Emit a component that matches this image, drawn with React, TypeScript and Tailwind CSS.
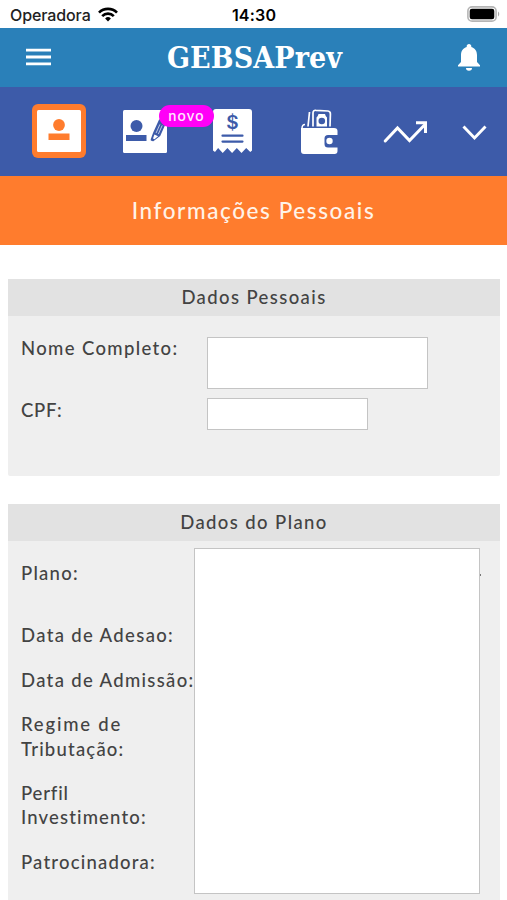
import type { ReactNode } from 'react'

function StatusBar() {
  return (
    <div className="flex h-7 items-center bg-white pl-[10px] pr-[9px] text-black">
      <div className="flex flex-1 items-center gap-[7px]">
        <span className="font-[Inter] text-[16px] leading-7 tracking-[-0.1px] text-[#222] pt-[2px]">Operadora</span>
        <svg width="20" height="15" viewBox="0 0 20 15" fill="none" stroke="black" strokeWidth="2.7">
          <path d="M1 5.6a12.8 12.8 0 0 1 18 0" />
          <path d="M4.2 9.1a8.2 8.2 0 0 1 11.6 0" />
          <path d="M10 14.4l-2.9-3a4.1 4.1 0 0 1 5.8 0z" fill="black" stroke="none" />
        </svg>
      </div>
      <span className="font-[Inter] text-[16px] font-semibold leading-7 tracking-[0.2px] pt-[2px]">14:30</span>
      <div className="flex flex-1 justify-end">
        <svg className="-mr-[2px]" width="33" height="16" viewBox="0 0 33 16">
          <rect x="0.9" y="0.9" width="28.2" height="14.2" rx="4.2" fill="white" stroke="#b5b5b5" strokeWidth="1.6" />
          <rect x="2.7" y="2.8" width="24.6" height="10.4" rx="2.2" fill="black" />
          <path d="M31 5.5c1.6.8 1.6 4.2 0 5z" fill="#aaa" />
        </svg>
      </div>
    </div>
  )
}

function Header() {
  return (
    <header className="flex h-[59px] items-center justify-between bg-[#2a80b9] pl-[26px] pr-[27px] text-white">
      <svg className="-mt-[2px]" width="25" height="18" viewBox="0 0 25 18" fill="currentColor">
        <path d="M0 .7h25v2.8H0zM0 7.6h25v2.8H0zM0 14.5h25v2.8H0z" />
      </svg>
      <h1 className="font-['DejaVu_Serif_Condensed','DejaVu_Serif',serif] text-[30px] font-bold leading-none tracking-[0.1px] [font-stretch:condensed]">
        GEBSAPrev
      </h1>
      <svg width="22" height="27" viewBox="0 0 22 27" fill="currentColor">
        <path d="M11 0c-1.4 0-2.3 1-2.3 2.2v.7C5 3.9 3 7 3 11v7l-3 3.2v1.2h22v-1.2L19 18v-7c0-4-2-7.1-5.7-8.1v-.7C13.3 1 12.4 0 11 0zM8 24a3 2.8 0 0 0 6 0z" />
      </svg>
    </header>
  )
}

function PersonIcon() {
  return (
    <div className="-mt-[2px] flex size-[54px] items-center justify-center rounded-[6px] bg-[#ff7c2d]">
      <svg width="44" height="42" viewBox="0 0 44 42">
        <rect width="44" height="42" rx="1.5" fill="white" />
        <circle cx="22" cy="15" r="5.9" fill="#ff7c2d" />
        <rect x="11.5" y="23.5" width="21" height="6.5" fill="#ff7c2d" />
      </svg>
    </div>
  )
}

function PersonEditIcon() {
  return (
    <svg width="44" height="43" viewBox="0 0 44 43">
      <rect width="44" height="43" rx="1.5" fill="white" />
      <circle cx="13.5" cy="16" r="6" fill="#3d5ba9" />
      <rect x="3" y="25" width="20.5" height="6" fill="#3d5ba9" />
      <g transform="translate(28.3 30.8) rotate(24)">
        <path d="M0 0q-1.2 0-1.2-1.5L-1.6-8V-23h7.8V-8L2-.5Q1.5 0 0 0z" fill="#3d5ba9" />
        <path d="M1.2-18.5V-9M3.7-18.5V-9" stroke="white" strokeWidth=".6" />
        <path d="M.3-7h4L2.2-2.800H.6z" fill="white" />
      </g>
    </svg>
  )
}

function ReceiptIcon() {
  return (
    <svg width="39" height="46" viewBox="0 0 39 46">
      <path
        d="M3 0h33q3 0 3 3v38.5l-1.7 1.5-4.1-4-4.7 5-4.7-5-4.700 5-4.700-5-4.700 5-4.600-5L2 43l-2-1.500V3q0-3 3-3z"
        fill="white"
      />
      <path d="M9.5 26.7h20M9.5 32.6h20" stroke="#3d5ba9" strokeWidth="2.2" strokeLinecap="round" />
      <text
        x="19.5"
        y="20.3"
        textAnchor="middle"
        fontFamily="Inter, sans-serif"
        fontSize="19"
        fontWeight="600"
        fill="#3d5ba9"
      >
        $
      </text>
    </svg>
  )
}

function WalletIcon() {
  return (
    <svg width="37" height="46" viewBox="0 0 37 46" fill="none">
      <path d="M7 17.5 8.5 3M12 17.5V4q0-3 3-2.7l12 .7q2.5.3 2.4 3L29 17.5" stroke="white" strokeWidth="1.7" />
      <path d="M15.5 17.5V8.5Q17 7 17.5 5h6.5q.5 2 2 3.5v9z" fill="white" />
      <circle cx="20.8" cy="12" r="3.3" fill="#3d5ba9" />
      <path d="M4 15.5q-3 0-3 4" stroke="white" strokeWidth="1.5" />
      <path
        d="M0 19h33q3.5 0 3.5 3v4H27q-3.5 0-3.5 3.5v5.5q0 3.5 3.5 3.5h9.5V42q0 3-3 3H3q-3 0-3-3z"
        fill="white"
      />
      <circle cx="28.5" cy="32" r="3.2" fill="white" />
    </svg>
  )
}

function IconBar() {
  return (
    <nav className="flex h-[89px] items-center bg-[#3d5ba9] pl-8 text-white">
      <PersonIcon />
      <div className="relative ml-[37px]">
        <PersonEditIcon />
        <span className="absolute left-[36px] top-[-5px] z-10 flex h-[22px] w-[55px] items-center justify-center rounded-full bg-[#ff00f7] pb-px text-[14.5px] font-semibold tracking-[1.2px] text-[#ffe4fd]">
          novo
        </span>
      </div>
      <div className="ml-[46px]">
        <ReceiptIcon />
      </div>
      <div className="ml-[49px]">
        <WalletIcon />
      </div>
      <svg className="ml-[45px]" width="45" height="24" viewBox="0 0 45 24" fill="none" stroke="currentColor" strokeWidth="3">
        <path d="M2.200 21 14.500 8l12 12.500L42 4.500" strokeLinecap="round" />
        <path d="M33 2.800h9.500V13" />
      </svg>
      <svg className="ml-[34px] mt-[2px]" width="25" height="18" viewBox="0 0 25 18" fill="none" stroke="currentColor" strokeWidth="2.9">
        <path d="m1.500 2.500 11 11.500L23.500 2.500" />
      </svg>
    </nav>
  )
}

interface CardProps {
  title: string
  className: string
  children: ReactNode
}

function Card({ title, className, children }: CardProps) {
  return (
    <section className={`ml-2 mr-[7px] rounded-b-[2px] bg-[#efefef] ${className}`}>
      <h2 className="h-[37px] bg-[#e2e2e2] text-center text-[18.5px] leading-[37px] tracking-[1.4px]">{title}</h2>
      {children}
    </section>
  )
}

const planLabels = [
  { text: 'Plano:', className: 'mb-[38px] tracking-[1.25px]' },
  { text: 'Data de Adesao:', className: 'mb-5 tracking-[1.35px]' },
  { text: 'Data de Admissão:', className: 'mb-5 tracking-[1.33px]' },
  { text: 'Regime de', className: 'tracking-[1.8px]' },
  { text: 'Tributação:', className: 'mb-5 tracking-[1.2px]' },
  { text: 'Perfil', className: 'tracking-[0.85px]' },
  { text: 'Investimento:', className: 'mb-5 tracking-[1.15px]' },
  { text: 'Patrocinadora:', className: 'tracking-[1.2px]' },
]

export default function App() {
  return (
    <div className="h-[900px] w-[507px] overflow-hidden bg-white font-[Lato,sans-serif] font-medium text-[#434343]">
      <StatusBar />
      <Header />
      <IconBar />
      <div className="flex h-[69px] items-center justify-center bg-[#ff7c2d] pt-px text-[22.5px] tracking-[1.6px] text-[#fff3e8]">
        Informações Pessoais
      </div>

      <Card title="Dados Pessoais" className="mt-[34px] h-[197px]">
        <div className="flex pl-[13px] pt-[21px]">
          <div className="w-[186px] text-[18.5px] leading-[24px]">
            <p className="-mt-px mb-[38px] tracking-[1.35px]">Nome Completo:</p>
            <p className="tracking-[0.7px]">CPF:</p>
          </div>
          <div>
            <div className="h-[52px] w-[221px] border border-[#c4c4c4] bg-white" />
            <div className="mt-[9px] h-8 w-[161px] border border-[#c4c4c4] bg-white" />
          </div>
        </div>
      </Card>

      <Card title="Dados do Plano" className="mt-7 h-[420px]">
        <div className="flex pl-[13px]">
          <div className="w-[173px] whitespace-nowrap pt-[20px] text-[18.5px] leading-[24.4px]">
            {planLabels.map(label => (
              <p key={label.text} className={label.className}>{label.text}</p>
            ))}
          </div>
          <div className="mt-[7px] h-[346px] w-[286px] border border-[#c4c4c4] bg-white" />
          <div className="mt-[33px] h-[2px] w-px bg-[#777]" />
        </div>
      </Card>
    </div>
  )
}
